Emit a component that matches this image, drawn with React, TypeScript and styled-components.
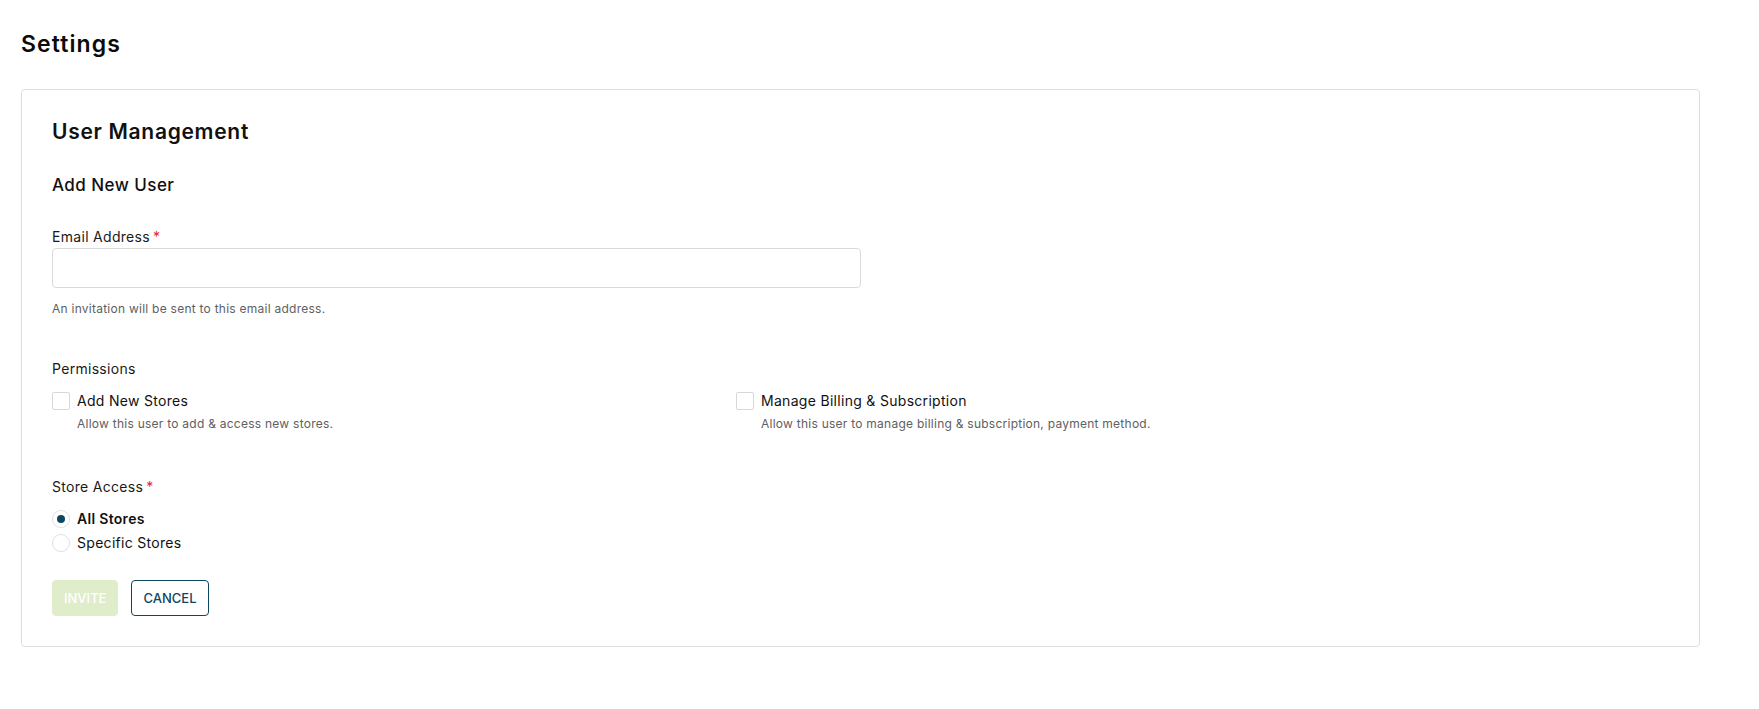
import styled, { createGlobalStyle } from "styled-components";

const GlobalStyle = createGlobalStyle`
    body {
        margin: 0;
        background: #ffffff;
        font-family: Inter, "Noto Sans", sans-serif;
        color: #111111;
    }
    * { box-sizing: border-box; }
`;

const Page = styled.div`
    padding: 0 59px 40px 21px;
`;

const PageTitle = styled.h1`
    margin: 28px 0 0;
    font-size: 23px;
    line-height: 32px;
    font-weight: 600;
    letter-spacing: 1.1px;
    color: #0b0b0b;
`;

const Card = styled.section`
    margin-top: 29px;
    border: 1px solid #dedede;
    border-radius: 4px;
    padding: 28px 30px 30px;
    display: flex;
    flex-direction: column;
`;

const CardTitle = styled.h2`
    margin: 0;
    font-size: 21px;
    line-height: 28px;
    font-weight: 600;
    letter-spacing: 0.7px;
`;

const SubTitle = styled.h3`
    margin: 26px 0 0;
    font-size: 17px;
    line-height: 26px;
    font-weight: 500;
    letter-spacing: 0.45px;
`;

const Group = styled.div<{ $gap: number }>`
    margin-top: ${p => p.$gap}px;
    display: flex;
    flex-direction: column;
`;

const Label = styled.label`
    font-size: 14px;
    line-height: 20px;
    letter-spacing: 0.3px;
    color: #1a1a1a;
`;

const Required = styled.span`
    color: #e5252a;
    margin-left: 3px;
`;

const Input = styled.input`
    margin-top: 1px;
    width: 809px;
    height: 40px;
    border: 1px solid #dadada;
    border-radius: 4px;
    padding: 0 12px;
    font: inherit;
    font-size: 14px;
    outline: none;
`;

const Help = styled.p`
    margin: 12px 0 0;
    font-size: 12px;
    line-height: 18px;
    letter-spacing: 0.25px;
    color: #606060;
`;

const PermissionGrid = styled.div`
    margin-top: 12px;
    display: grid;
    grid-template-columns: 684px 1fr;
`;

const Permission = styled.div`
    display: grid;
    grid-template-columns: 18px 1fr;
    column-gap: 7px;
    align-items: center;
`;

const Box = styled.span`
    width: 18px;
    height: 18px;
    border: 1px solid #d8d8d8;
    border-radius: 2px;
    background: #fff;
`;

const OptionName = styled.span<{ $bold?: boolean }>`
    font-size: 14px;
    line-height: 20px;
    letter-spacing: 0.3px;
    font-weight: ${p => (p.$bold ? 600 : 400)};
    color: #111;
`;

const OptionNote = styled.span`
    grid-column: 2;
    margin-top: 4px;
    font-size: 12px;
    line-height: 17px;
    letter-spacing: 0.25px;
    color: #606060;
`;

const RadioList = styled.div`
    margin-top: 12px;
    display: flex;
    flex-direction: column;
    gap: 3.5px;
`;

const RadioRow = styled.div`
    display: flex;
    align-items: center;
    gap: 7px;
`;

const Radio = styled.span<{ $checked?: boolean }>`
    width: 18px;
    height: 18px;
    border-radius: 50%;
    border: 1px solid #e0e0e0;
    display: flex;
    align-items: center;
    justify-content: center;
    &::after {
        content: "";
        width: 8px;
        height: 8px;
        border-radius: 50%;
        background: ${p => (p.$checked ? "#0e4561" : "transparent")};
    }
`;

const Actions = styled.div`
    margin-top: 27.5px;
    display: flex;
    gap: 13px;
`;

const Button = styled.button<{ $variant: "primary" | "outline" }>`
    height: 36px;
    padding: 0 11px;
    border-radius: 4px;
    font-family: inherit;
    font-size: 13px;
    font-weight: 500;
    text-transform: uppercase;
    cursor: pointer;
    border: 1px solid ${p => (p.$variant === "primary" ? "#dfedcb" : "#0e4561")};
    background: ${p => (p.$variant === "primary" ? "#dfedcb" : "#ffffff")};
    color: ${p => (p.$variant === "primary" ? "#ffffff" : "#0e4561")};
`;

const permissions = [
    { name: "Add New Stores", note: "Allow this user to add & access new stores." },
    { name: "Manage Billing & Subscription", note: "Allow this user to manage billing & subscription, payment method." },
];

export default function App() {
    return (
        <Page>
            <GlobalStyle />
            <PageTitle>Settings</PageTitle>
            <Card>
                <CardTitle>User Management</CardTitle>
                <SubTitle>Add New User</SubTitle>

                <Group $gap={29}>
                    <Label>Email Address<Required>*</Required></Label>
                    <Input type="email" />
                    <Help>An invitation will be sent to this email address.</Help>
                </Group>

                <Group $gap={41}>
                    <Label>Permissions</Label>
                    <PermissionGrid>
                        {permissions.map(p => (
                            <Permission key={p.name}>
                                <Box />
                                <OptionName>{p.name}</OptionName>
                                <OptionNote>{p.note}</OptionNote>
                            </Permission>
                        ))}
                    </PermissionGrid>
                </Group>

                <Group $gap={45}>
                    <Label>Store Access<Required>*</Required></Label>
                    <RadioList>
                        <RadioRow>
                            <Radio $checked />
                            <OptionName $bold>All Stores</OptionName>
                        </RadioRow>
                        <RadioRow>
                            <Radio />
                            <OptionName>Specific Stores</OptionName>
                        </RadioRow>
                    </RadioList>
                </Group>

                <Actions>
                    <Button $variant="primary" disabled>Invite</Button>
                    <Button $variant="outline">Cancel</Button>
                </Actions>
            </Card>
        </Page>
    );
}
